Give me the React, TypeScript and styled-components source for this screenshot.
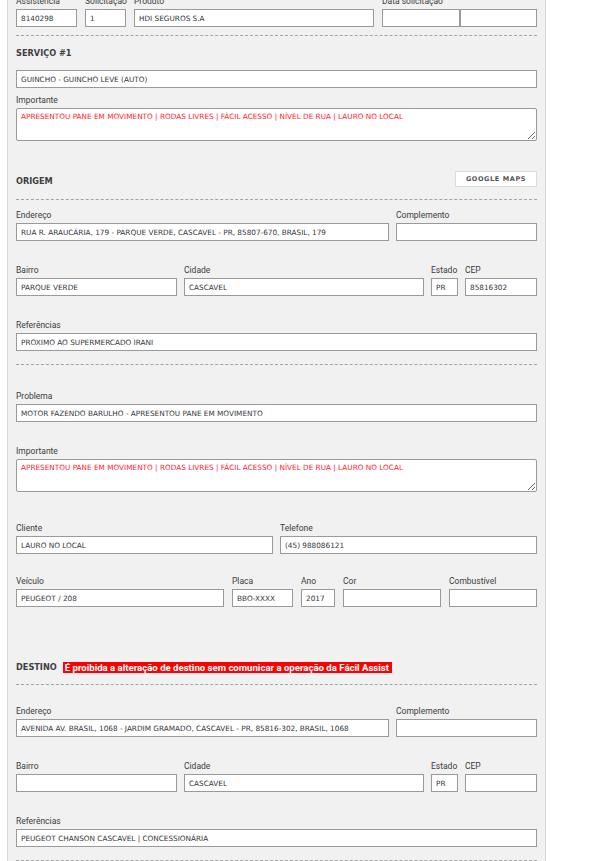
import React from "react";
import styled, { createGlobalStyle } from "styled-components";

const Global = createGlobalStyle`
  html, body { margin: 0; padding: 0; background: #fff; }
  body { overflow: hidden; }
  * { box-sizing: border-box; }
`;

const Panel = styled.div`
  margin: -6px 0 0 7px;
  width: 539px;
  background: #f1f1f1;
  border-left: 1px solid #d8d8d8;
  border-right: 1px solid #d8d8d8;
  padding: 0 8px 40px 8px;
  display: flex;
  flex-direction: column;
`;

const Row = styled.div<{ $cols: string; $mt?: number; $gap?: number }>`
  display: grid;
  grid-template-columns: ${(p) => p.$cols};
  column-gap: ${(p) => p.$gap ?? 7}px;
  margin-top: ${(p) => p.$mt ?? 0}px;
`;

const Field = styled.div`
  display: flex;
  flex-direction: column;
  min-width: 0;
`;

const Label = styled.label`
  font-family: Roboto, "Liberation Sans", sans-serif;
  font-size: 8.5px;
  line-height: 14px;
  height: 14px;
  margin-bottom: 1px;
  color: #3c3c3c;
  white-space: nowrap;
`;

const Input = styled.input<{ $mt?: number }>`
  display: block;
  width: 100%;
  height: 18px;
  margin: ${(p) => p.$mt ?? 0}px 0 0 0;
  padding: 0 4px;
  border: 1px solid #9a9a9a;
  border-radius: 0;
  background: #fff;
  font-family: "DejaVu Sans", Verdana, sans-serif;
  font-size: 7.3px;
  color: #34363c;
  outline: none;
`;

const Pair = styled.div`
  display: grid;
  grid-template-columns: 78px 77px;
`;

const TextArea = styled.textarea`
  display: block;
  width: 100%;
  height: 33px;
  margin: 0;
  padding: 3px 4px;
  border: 1px solid #9a9a9a;
  border-radius: 2px;
  background: #fff;
  font-family: "DejaVu Sans", Verdana, sans-serif;
  font-size: 7.3px;
  line-height: 10px;
  color: #ff1a2e;
  resize: both;
  outline: none;
`;

const Divider = styled.hr<{ $mt: number }>`
  margin: ${(p) => p.$mt}px 0 0 0;
  height: 0;
  border: 0;
  border-top: 1px dashed #a3a3a3;
`;

const Title = styled.h3<{ $mt?: number }>`
  margin: ${(p) => p.$mt ?? 0}px 0 0 0;
  font-family: "DejaVu Sans", Verdana, sans-serif;
  font-weight: bold;
  font-size: 8.2px;
  line-height: 12px;
  color: #3f3f3f;
`;

const Header = styled.div<{ $mt: number }>`
  display: flex;
  align-items: center;
  justify-content: space-between;
  margin-top: ${(p) => p.$mt}px;
`;

const HeaderTitle = styled(Title)`
  padding-top: 3px;
`;

const TitleGroup = styled.div`
  display: flex;
  align-items: center;
  gap: 6px;
`;

const MapsButton = styled.button`
  width: 82px;
  height: 16px;
  padding: 0;
  background: #fff;
  border: 1px solid #dcdcdc;
  font-family: "DejaVu Sans", Verdana, sans-serif;
  font-weight: bold;
  font-size: 6.5px;
  letter-spacing: 0.6px;
  color: #555;
  cursor: pointer;
`;

const Warning = styled.span`
  background: #ff0000;
  color: #fff;
  font-family: Roboto, "Liberation Sans", sans-serif;
  font-weight: bold;
  font-size: 9.6px;
  line-height: 11px;
  padding: 0 3px 0 2px;
  white-space: nowrap;
`;

const Spacer = styled.div<{ $h: number }>`
  height: ${(p) => p.$h}px;
`;

const F = ({ label, value = "" }: { label: string; value?: string }) => (
  <Field>
    <Label>{label}</Label>
    <Input readOnly value={value} />
  </Field>
);

const importante =
  "APRESENTOU PANE EM MOVIMENTO | RODAS LIVRES | FÁCIL ACESSO | NÍVEL DE RUA | LAURO NO LOCAL";

export default function App() {
  return (
    <>
      <Global />
      <Panel>
        <Row $cols="61px 41px 240px 155px" $gap={8}>
          <F label="Assistencia" value="8140298" />
          <F label="Solicitação" value="1" />
          <F label="Produto" value="HDI SEGUROS S.A" />
          <Field>
            <Label>Data solicitação</Label>
            <Pair>
              <Input readOnly value="" />
              <Input readOnly value="" />
            </Pair>
          </Field>
        </Row>
        <Divider $mt={8} />

        <Title $mt={11}>SERVIÇO #1</Title>
        <Input $mt={11} readOnly value="GUINCHO - GUINCHO LEVE (AUTO)" />
        <Row $cols="1fr" $mt={5}>
          <Field>
            <Label>Importante</Label>
            <TextArea readOnly value={importante} />
          </Field>
        </Row>

        <Header $mt={30}>
          <HeaderTitle>ORIGEM</HeaderTitle>
          <MapsButton>GOOGLE MAPS</MapsButton>
        </Header>
        <Divider $mt={12} />

        <Row $cols="1fr 141px" $mt={8}>
          <F
            label="Endereço"
            value="RUA R. ARAUCÁRIA, 179 - PARQUE VERDE, CASCAVEL - PR, 85807-670, BRASIL, 179"
          />
          <F label="Complemento" />
        </Row>
        <Row $cols="161px 240px 27px 1fr" $mt={22}>
          <F label="Bairro" value="PARQUE VERDE" />
          <F label="Cidade" value="CASCAVEL" />
          <F label="Estado" value="PR" />
          <F label="CEP" value="85816302" />
        </Row>
        <Row $cols="1fr" $mt={22}>
          <F label="Referências" value="PROXIMO AO SUPERMERCADO IRANI" />
        </Row>
        <Divider $mt={13} />

        <Row $cols="1fr" $mt={24}>
          <F label="Problema" value="MOTOR FAZENDO BARULHO - APRESENTOU PANE EM MOVIMENTO" />
        </Row>
        <Row $cols="1fr" $mt={22}>
          <Field>
            <Label>Importante</Label>
            <TextArea readOnly value={importante} />
          </Field>
        </Row>
        <Row $cols="1fr 1fr" $mt={29}>
          <F label="Cliente" value="LAURO NO LOCAL" />
          <F label="Telefone" value="(45) 988086121" />
        </Row>
        <Row $cols="208px 61px 34px 98px 1fr" $gap={8} $mt={20}>
          <F label="Veículo" value="PEUGEOT / 208" />
          <F label="Placa" value="BBO-XXXX" />
          <F label="Ano" value="2017" />
          <F label="Cor" />
          <F label="Combustível" />
        </Row>

        <Header $mt={54}>
          <TitleGroup>
            <Title>DESTINO</Title>
            <Warning>É proibida a alteração de destino sem comunicar a operação da Fácil Assist</Warning>
          </TitleGroup>
        </Header>
        <Divider $mt={11} />

        <Row $cols="1fr 141px" $mt={19}>
          <F
            label="Endereço"
            value="AVENIDA AV. BRASIL, 1068 - JARDIM GRAMADO, CASCAVEL - PR, 85816-302, BRASIL, 1068"
          />
          <F label="Complemento" />
        </Row>
        <Row $cols="161px 240px 27px 1fr" $mt={22}>
          <F label="Bairro" />
          <F label="Cidade" value="CASCAVEL" />
          <F label="Estado" value="PR" />
          <F label="CEP" />
        </Row>
        <Row $cols="1fr" $mt={22}>
          <F label="Referências" value="PEUGEOT CHANSON CASCAVEL | CONCESSIONÁRIA" />
        </Row>
        <Divider $mt={13} />
        <Spacer $h={20} />
      </Panel>
    </>
  );
}
